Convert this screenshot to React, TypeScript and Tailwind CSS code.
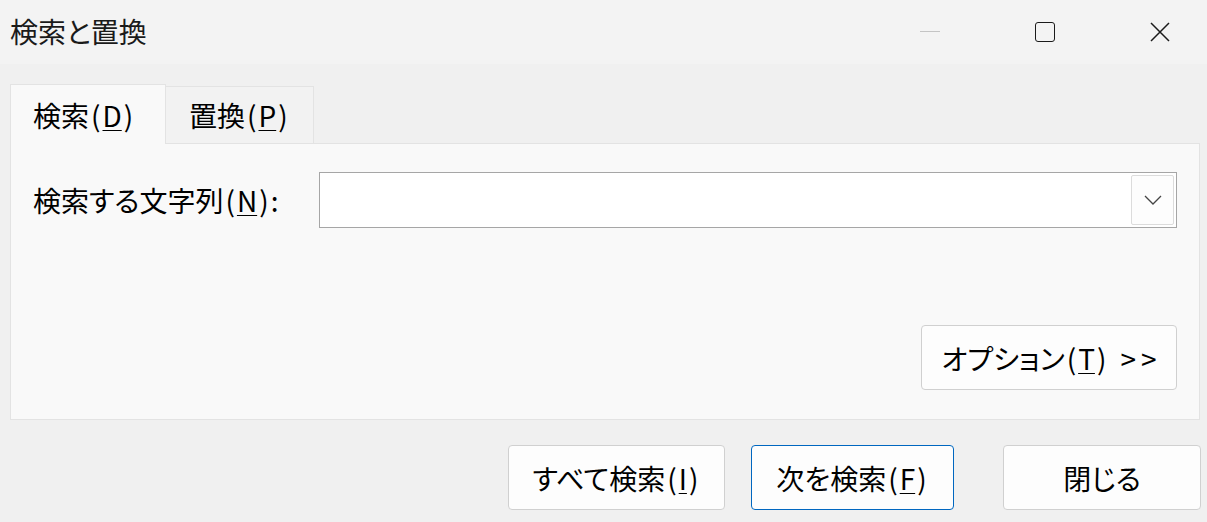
import React from 'react';

function Key({ k }: { k: string }) {
  return (
    <>
      <span className="px-[2px]">(</span>
      <span className="underline underline-offset-[3px] decoration-1">{k}</span>
      <span className="px-[2px]">)</span>
    </>
  );
}

function WinButton({ children, className }: { children: React.ReactNode; className: string }) {
  return (
    <button
      type="button"
      className={`h-[65px] rounded-[4px] border bg-[#fdfdfd] text-[28px] leading-none flex items-center justify-center ${className}`}
    >
      {children}
    </button>
  );
}

export default function App() {
  return (
    <div className="w-[1207px] h-[522px] overflow-hidden bg-[#f0f0f0] text-black font-['Noto_Sans_CJK_JP','Noto_Sans',sans-serif] [font-feature-settings:'palt'] flex flex-col">
      {/* title bar */}
      <div className="h-[64px] bg-[#f3f3f3] flex items-center justify-between shrink-0">
        <div className="pl-[10px] pb-[3px] text-[28px] leading-none text-[#1a1a1a]">検索と置換</div>
        <div className="flex items-center gap-[95px] pr-[37px]">
          <div className="w-[20px] h-[20px] flex items-center">
            <div className="w-[20px] h-[1px] bg-[#c4c4c4] mt-[-1px]" />
          </div>
          <div className="w-[20px] h-[20px] border-[1.5px] border-[#1a1a1a] rounded-[3px]" />
          <svg width="20" height="20" viewBox="0 0 20 20" className="text-[#1a1a1a]">
            <path d="M1 1 L19 19 M19 1 L1 19" stroke="currentColor" strokeWidth="1.5" fill="none" />
          </svg>
        </div>
      </div>

      {/* tabs */}
      <div className="px-[10px] pt-[20px] flex items-end shrink-0">
        <div className="w-[156px] h-[60px] mb-[-1px] relative z-10 bg-[#f9f9f9] border border-b-0 border-[#e3e3e3] text-[28px] leading-none flex items-center pl-[22px]">
          検索<Key k="D" />
        </div>
        <div className="w-[148px] h-[57px] bg-[#f2f2f2] border border-l-0 border-b-0 border-[#e3e3e3] text-[28px] leading-none flex items-center pl-[23px]">
          置換<Key k="P" />
        </div>
      </div>

      {/* panel */}
      <div className="mx-[10px] mr-[7px] h-[277px] bg-[#f9f9f9] border border-[#e3e3e3] flex flex-col pt-[28px] pb-[29px] pl-[22px] pr-[22px] shrink-0">
        <div className="flex items-center h-[56px]">
          <div className="w-[286px] text-[28px] leading-none">
            検索する文字列<Key k="N" />:
          </div>
          <div className="flex-1 h-[56px] bg-white border border-[#a6a6a6] flex items-center justify-end pr-[2px]">
            <div className="w-[43px] h-[50px] bg-[#fdfdfd] border border-[#dcdcdc] rounded-[2px] flex items-center justify-center">
              <svg width="18" height="10" viewBox="0 0 18 10">
                <path d="M1 1 L9 9 L17 1" stroke="#444" strokeWidth="1.3" fill="none" />
              </svg>
            </div>
          </div>
        </div>
        <div className="mt-auto flex justify-end">
          <WinButton className="w-[256px] border-[#d0d0d0]">
            オプション<Key k="T" />
            <span className="ml-[12px] tracking-[5px] mr-[-5px]">&gt;&gt;</span>
          </WinButton>
        </div>
      </div>

      {/* bottom buttons */}
      <div className="flex justify-end pt-[25px] pr-[6px]">
        <WinButton className="w-[217px] border-[#d0d0d0]">
          すべて検索<Key k="I" />
        </WinButton>
        <WinButton className="w-[203px] ml-[26px] border-[#0067c0]">
          次を検索<Key k="F" />
        </WinButton>
        <WinButton className="w-[198px] ml-[49px] border-[#d0d0d0]">閉じる</WinButton>
      </div>
    </div>
  );
}
